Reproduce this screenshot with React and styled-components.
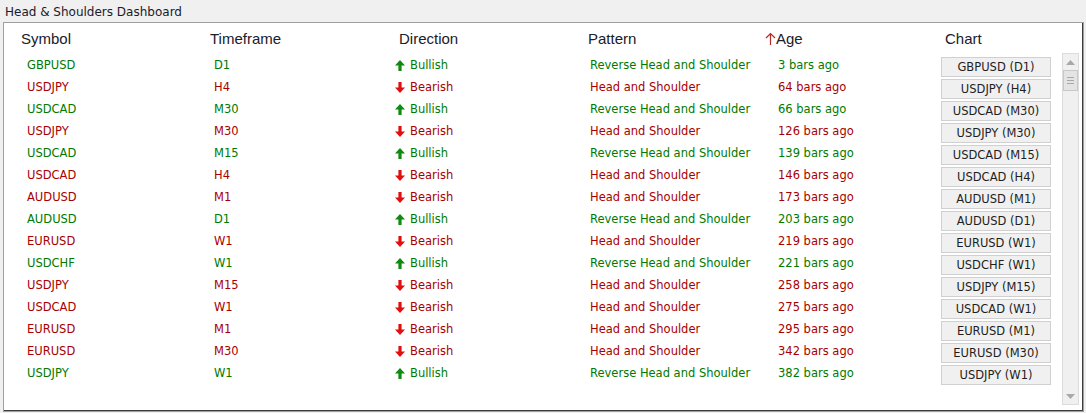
import React from "react";
import styled, { createGlobalStyle } from "styled-components";

const GREEN = "#007a00";
const RED = "#a80000";

const Global = createGlobalStyle`
  html, body {
    margin: 0;
    padding: 0;
    background: #f0f0f0;
  }
  body {
    width: 1086px;
    height: 413px;
    overflow: hidden;
    font-family: "DejaVu Sans", Verdana, sans-serif;
  }
`;

const Window = styled.div`
  display: flex;
  flex-direction: column;
  height: 413px;
`;

const TitleBar = styled.div`
  height: 22px;
  display: flex;
  align-items: center;
  padding: 2px 0 0 5px;
  box-sizing: border-box;
  font-size: 12px;
  color: #1a1a2a;
`;

const Panel = styled.div`
  margin: 0 2px 1px 3px;
  height: 390px;
  box-sizing: border-box;
  background: #fff;
  border: 1px solid #a0a0a0;
  box-shadow: inset -1px -1px 0 #3c3c3c;
  display: flex;
  flex-direction: column;
`;

const Columns = "189px 185px 193px 177px 176px 110px";

const HeaderRow = styled.div`
  height: 30px;
  box-sizing: border-box;
  padding: 0 0 0 17px;
  display: grid;
  grid-template-columns: ${Columns};
  align-items: center;
  font-family: "Liberation Sans", Arial, sans-serif;
  font-size: 15px;
  color: #202028;
`;

const HeaderCell = styled.div`
  padding-left: ${(p) => p.$indent || 0}px;
  display: flex;
  align-items: center;
`;

const Body = styled.div`
  flex: 1;
  display: flex;
  padding: 0 4px 6px 0;
`;

const List = styled.div`
  flex: 1;
  padding: 2px 0 0 17px;
`;

const Row = styled.div`
  height: 22px;
  display: grid;
  grid-template-columns: ${Columns};
  align-items: center;
  font-size: 11.5px;
`;

const Cell = styled.div`
  padding-left: ${(p) => p.$indent || 0}px;
  padding-bottom: 2px;
  color: ${(p) => (p.$bull ? GREEN : RED)};
  display: flex;
  align-items: center;
  gap: 5px;
  white-space: nowrap;
`;

const ChartButton = styled.button`
  width: 110px;
  height: 20px;
  box-sizing: border-box;
  border: 1px solid #d0d0d0;
  background: #f0f0f0;
  color: #1e1e1e;
  font-family: "DejaVu Sans", Verdana, sans-serif;
  font-size: 11.5px;
  padding: 0;
  margin-top: 2px;
  cursor: pointer;
`;

const ScrollBar = styled.div`
  width: 17px;
  box-sizing: border-box;
  border: 1px solid #dcdcdc;
  background: #f0f0f0;
  display: flex;
  flex-direction: column;
  align-items: center;
`;

const ScrollArrow = styled.div`
  height: 16px;
  width: 100%;
  display: flex;
  align-items: center;
  justify-content: center;
`;

const Thumb = styled.div`
  width: 15px;
  height: 21px;
  box-sizing: border-box;
  border: 1px solid #c8c8c8;
  background: #e4e4e4;
  display: flex;
  flex-direction: column;
  align-items: center;
  justify-content: center;
  gap: 2px;
`;

const Grip = styled.div`
  width: 7px;
  height: 1px;
  background: #a8a8a8;
`;

const Track = styled.div`
  flex: 1;
`;

const UpArrow = ({ color }) => (
  <svg width="10" height="11" viewBox="0 0 10 11">
    <polygon points="5,0 10,5.5 6.6,5.5 6.6,11 3.4,11 3.4,5.5 0,5.5" fill={color} />
  </svg>
);

const DownArrow = ({ color }) => (
  <svg width="10" height="11" viewBox="0 0 10 11">
    <polygon points="3.4,0 6.6,0 6.6,5.5 10,5.5 5,11 0,5.5 3.4,5.5" fill={color} />
  </svg>
);

const SortArrow = () => (
  <svg width="11" height="14" viewBox="0 0 11 14" style={{ marginTop: 1 }}>
    <path d="M5.5 1.5 V13 M1 6 L5.5 1.5 L10 6" stroke="#b42a2a" strokeWidth="1.2" fill="none" />
  </svg>
);

const rows = [
  ["GBPUSD", "D1", true, 3],
  ["USDJPY", "H4", false, 64],
  ["USDCAD", "M30", true, 66],
  ["USDJPY", "M30", false, 126],
  ["USDCAD", "M15", true, 139],
  ["USDCAD", "H4", false, 146],
  ["AUDUSD", "M1", false, 173],
  ["AUDUSD", "D1", true, 203],
  ["EURUSD", "W1", false, 219],
  ["USDCHF", "W1", true, 221],
  ["USDJPY", "M15", false, 258],
  ["USDCAD", "W1", false, 275],
  ["EURUSD", "M1", false, 295],
  ["EURUSD", "M30", false, 342],
  ["USDJPY", "W1", true, 382],
];

export default function App() {
  return (
    <Window>
      <Global />
      <TitleBar>Head &amp; Shoulders Dashboard</TitleBar>
      <Panel>
        <HeaderRow>
          <HeaderCell>Symbol</HeaderCell>
          <HeaderCell>Timeframe</HeaderCell>
          <HeaderCell $indent={4}>Direction</HeaderCell>
          <HeaderCell>Pattern</HeaderCell>
          <HeaderCell>
            <SortArrow />
            Age
          </HeaderCell>
          <HeaderCell $indent={4}>Chart</HeaderCell>
        </HeaderRow>
        <Body>
          <List>
            {rows.map(([sym, tf, bull, age], i) => (
              <Row key={i}>
                <Cell $bull={bull} $indent={6}>{sym}</Cell>
                <Cell $bull={bull} $indent={4}>{tf}</Cell>
                <Cell $bull={bull}>
                  {bull ? <UpArrow color="#108a10" /> : <DownArrow color="#e01010" />}
                  {bull ? "Bullish" : "Bearish"}
                </Cell>
                <Cell $bull={bull} $indent={2}>
                  {bull ? "Reverse Head and Shoulder" : "Head and Shoulder"}
                </Cell>
                <Cell $bull={bull} $indent={13}>{age} bars ago</Cell>
                <ChartButton>{`${sym} (${tf})`}</ChartButton>
              </Row>
            ))}
          </List>
          <ScrollBar>
            <ScrollArrow>
              <svg width="9" height="5" viewBox="0 0 9 5">
                <polygon points="0,5 4.5,0 9,5" fill="#a8a8a8" />
              </svg>
            </ScrollArrow>
            <Thumb>
              <Grip />
              <Grip />
              <Grip />
            </Thumb>
            <Track />
            <ScrollArrow>
              <svg width="9" height="5" viewBox="0 0 9 5">
                <polygon points="0,0 9,0 4.5,5" fill="#a8a8a8" />
              </svg>
            </ScrollArrow>
          </ScrollBar>
        </Body>
      </Panel>
    </Window>
  );
}
